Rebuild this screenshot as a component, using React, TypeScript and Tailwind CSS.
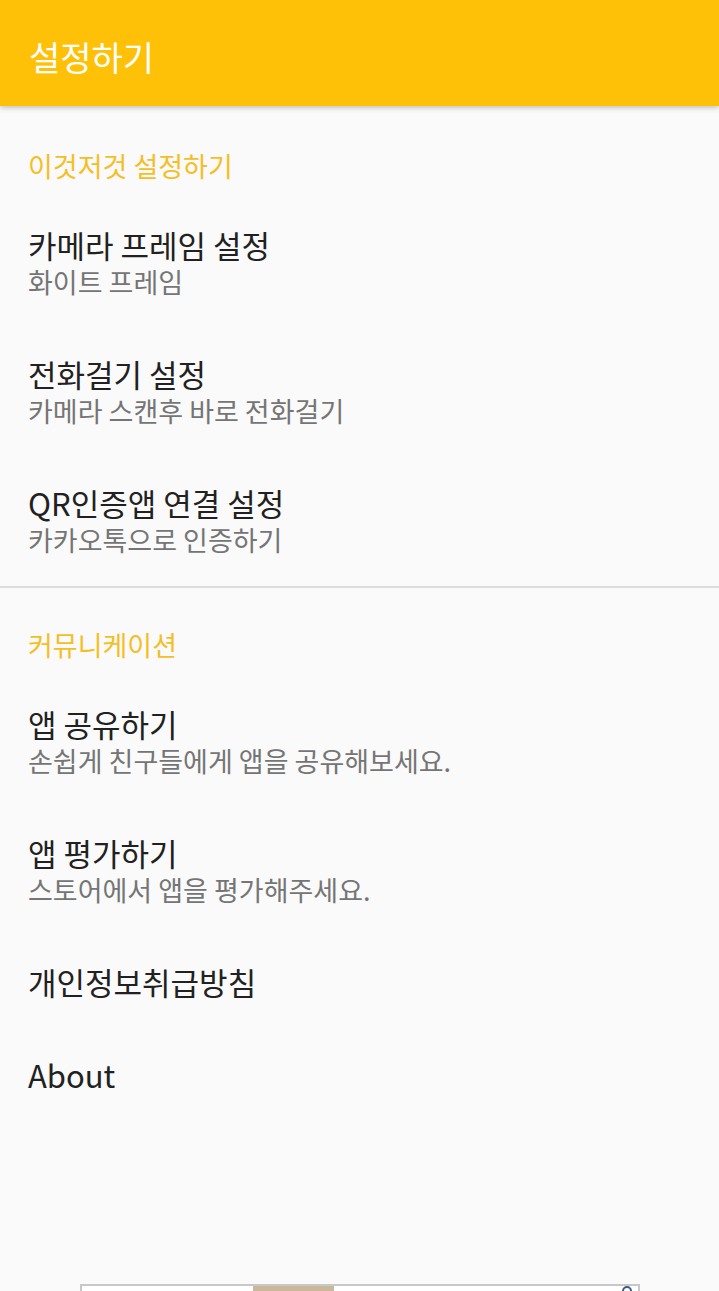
import React from "react";

const font = { fontFamily: '"Noto Sans CJK KR", "Noto Sans", sans-serif' };

type Item = { title: string; sub?: string };

function PrefItem({ title, sub }: Item) {
  return (
    <div className="px-[28px] pt-[27px] pb-[28px]">
      <div className="text-[31px] leading-[38px] text-[#212121]">{title}</div>
      {sub && <div className="text-[27px] leading-[36px] text-[#757575]">{sub}</div>}
    </div>
  );
}

function Category({ label, top }: { label: string; top: string }) {
  return (
    <div className={`px-[28px] ${top} pb-[18px]`}>
      <div className="text-[27px] leading-[30px] text-[#F5BE25]">{label}</div>
    </div>
  );
}

export default function App() {
  return (
    <div className="h-[1291px] w-[719px] overflow-hidden bg-[#FAFAFA]" style={font}>
      <div className="relative z-10 flex h-[106px] items-center bg-[#FFC107] px-[29px] shadow-[0_2px_5px_rgba(0,0,0,0.22)]">
        <div className="pt-[8px] text-[34px] leading-[40px] text-white">설정하기</div>
      </div>
      <Category label="이것저것 설정하기" top="pt-[45px]" />
      <PrefItem title="카메라 프레임 설정" sub="화이트 프레임" />
      <PrefItem title="전화걸기 설정" sub="카메라 스캔후 바로 전화걸기" />
      <PrefItem title="QR인증앱 연결 설정" sub="카카오톡으로 인증하기" />
      <div className="h-[2px] bg-[#DCDCDC]" />
      <Category label="커뮤니케이션" top="pt-[42px]" />
      <PrefItem title="앱 공유하기" sub="손쉽게 친구들에게 앱을 공유해보세요." />
      <PrefItem title="앱 평가하기" sub="스토어에서 앱을 평가해주세요." />
      <PrefItem title="개인정보취급방침" />
      <PrefItem title="About" />
      <div className="mt-[162px] flex justify-center">
        <div className="relative h-[75px] w-[560px] border-2 border-[#C8C8C8] bg-white">
          <div className="absolute left-[171px] top-0 h-[40px] w-[81px] bg-[#C9B89A]" />
          <div className="absolute right-[6px] top-0 h-[10px] w-[10px] rounded-full border-2 border-[#3B5B8A]" />
        </div>
      </div>
    </div>
  );
}
